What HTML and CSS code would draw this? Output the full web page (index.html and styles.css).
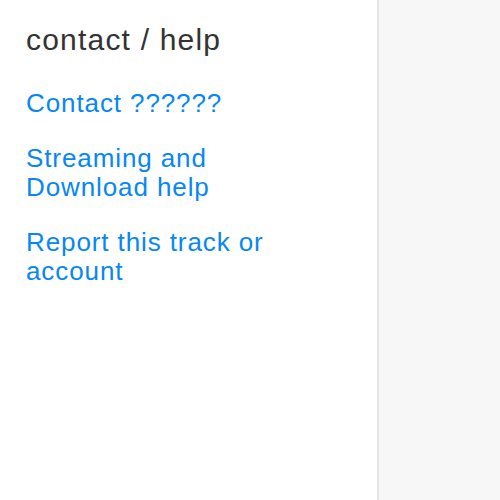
FILE: index.html
```html
<!DOCTYPE html>
<html>
<head>
<meta charset="utf-8">
<link rel="stylesheet" href="styles.css">
</head>
<body>
<div class="page">
  <aside class="panel">
    <h2 class="title">contact / help</h2>
    <ul class="links">
      <li><a href="#">Contact ??????</a></li>
      <li><a href="#">Streaming and Download help</a></li>
      <li><a href="#">Report this track or account</a></li>
    </ul>
  </aside>
  <div class="side"></div>
</div>
</body>
</html>
```
FILE: styles.css
```css
html, body {
  margin: 0;
  padding: 0;
  height: 100%;
}
body {
  font-family: "Liberation Sans", Arial, sans-serif;
  background: #ffffff;
}
.page {
  display: flex;
  height: 500px;
}
.panel {
  width: 379px;
  flex: none;
  box-sizing: border-box;
  padding: 22px 0 0 26px;
  border-right: 2px solid #e6e6e6;
  background: #ffffff;
}
.side {
  flex: 1;
  background: #f7f7f7;
}
.title {
  margin: 0;
  font-size: 30px;
  line-height: 36px;
  font-weight: normal;
  color: #333333;
  letter-spacing: 1.2px;
}
.links {
  list-style: none;
  margin: 31px 0 0 0;
  padding: 0;
  max-width: 275px;
}
.links li {
  margin: 0 0 26px 0;
  font-size: 26px;
  line-height: 29px;
  letter-spacing: 0.9px;
}
.links a {
  color: #0687f5;
  text-decoration: none;
}
```
